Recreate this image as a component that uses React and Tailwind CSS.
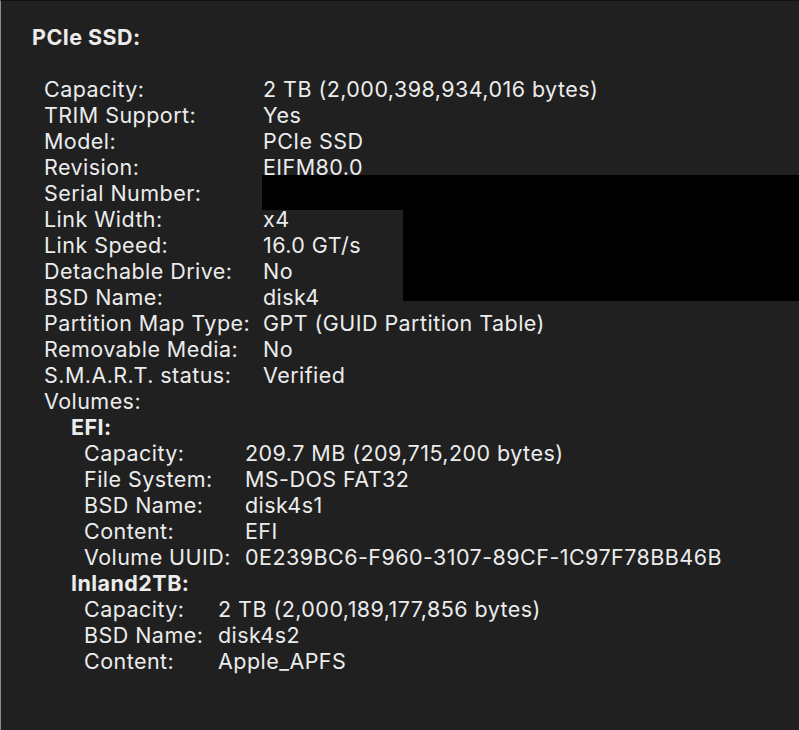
import React from 'react';

// Top-level drive properties
const DRIVE = [
  ['Capacity:', '2 TB (2,000,398,934,016 bytes)'],
  ['TRIM Support:', 'Yes'],
  ['Model:', 'PCIe SSD'],
  ['Revision:', 'EIFM80.0'],
  ['Serial Number:', ''],
  ['Link Width:', 'x4'],
  ['Link Speed:', '16.0 GT/s'],
  ['Detachable Drive:', 'No'],
  ['BSD Name:', 'disk4'],
  ['Partition Map Type:', 'GPT (GUID Partition Table)'],
  ['Removable Media:', 'No'],
  ['S.M.A.R.T. status:', 'Verified'],
];

const VOLUMES = [
  {
    name: 'EFI:',
    labelWidth: 'w-[161px]',
    rows: [
      ['Capacity:', '209.7 MB (209,715,200 bytes)'],
      ['File System:', 'MS-DOS FAT32'],
      ['BSD Name:', 'disk4s1'],
      ['Content:', 'EFI'],
      ['Volume UUID:', '0E239BC6-F960-3107-89CF-1C97F78BB46B'],
    ],
  },
  {
    name: 'Inland2TB:',
    labelWidth: 'w-[134px]',
    rows: [
      ['Capacity:', '2 TB (2,000,189,177,856 bytes)'],
      ['BSD Name:', 'disk4s2'],
      ['Content:', 'Apple_APFS'],
    ],
  },
];

const Row = ({ label, value, labelWidth }) => (
  <div className="flex h-[26px] items-center whitespace-nowrap">
    <span className={`${labelWidth} shrink-0`}>{label}</span>
    <span>{value}</span>
  </div>
);

export default function App() {
  return (
    <div
      className="relative h-[730px] w-[799px] overflow-hidden border-l border-t border-l-[#8c8c8c] border-t-[#111111] bg-[#202020] text-[21.5px] tracking-[0.45px] text-[#ececec]"
      style={{ fontFamily: 'Inter, "Liberation Sans", sans-serif' }}
    >
      <div className="pl-[31px] pt-[23px]">
        <div className="flex h-[26px] items-center font-bold">PCIe SSD:</div>
      </div>

      <div className="pl-[43px] pt-[26px]">
        {DRIVE.map(([label, value]) => (
          <Row key={label} label={label} value={value} labelWidth="w-[219px]" />
        ))}
        <div className="flex h-[26px] items-center">Volumes:</div>

        {VOLUMES.map((vol) => (
          <div key={vol.name} className="pl-[27px]">
            <div className="flex h-[26px] items-center font-bold">{vol.name}</div>
            <div className="pl-[13px]">
              {vol.rows.map(([label, value]) => (
                <Row key={label} label={label} value={value} labelWidth={vol.labelWidth} />
              ))}
            </div>
          </div>
        ))}
      </div>

      {/* redaction over serial number */}
      <div className="absolute left-[261px] top-[174px] h-[35px] w-[540px] bg-black" />
      <div className="absolute left-[402px] top-[174px] h-[126px] w-[400px] bg-black" />
    </div>
  );
}
